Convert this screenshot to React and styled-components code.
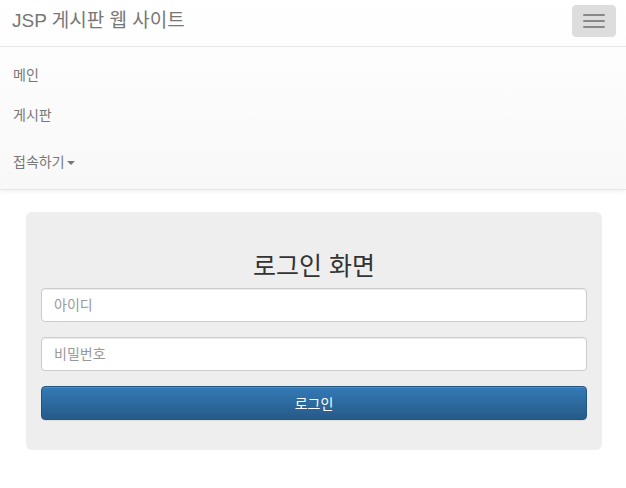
import { createGlobalStyle } from 'styled-components';
import styled from 'styled-components';

const GlobalStyle = createGlobalStyle`
  html, body {
    margin: 0;
    padding: 0;
    background: #fff;
  }
  body {
    font-family: "Liberation Sans", Arial, "Noto Sans CJK KR", sans-serif;
    font-size: 14px;
    line-height: 1.42857143;
    color: #333;
  }
  * {
    box-sizing: border-box;
  }
`;

const Navbar = styled.nav`
  background-image: linear-gradient(to bottom, #fff 0, #f8f8f8 100%);
  border-bottom: 1px solid #e7e7e7;
  box-shadow: inset 0 1px 0 rgba(255, 255, 255, 0.15), 0 1px 5px rgba(0, 0, 0, 0.075);
  margin-bottom: 22px;
`;

const NavHeader = styled.div`
  display: flex;
  align-items: center;
  justify-content: space-between;
  height: 46px;
  padding: 0 10px 0 12px;
`;

const Brand = styled.a`
  font-size: 19px;
  line-height: 20px;
  color: #777;
  text-decoration: none;
  margin-top: -4px;
`;

const Toggle = styled.button`
  display: flex;
  flex-direction: column;
  align-items: center;
  justify-content: center;
  gap: 4px;
  width: 44px;
  height: 32px;
  margin-top: -4px;
  padding: 0;
  background: #ddd;
  border: 1px solid #ddd;
  border-radius: 4px;
  cursor: pointer;
`;

const Bar = styled.span`
  display: block;
  width: 22px;
  height: 2px;
  border-radius: 1px;
  background: #888;
`;

const Collapse = styled.div`
  border-top: 1px solid #e7e7e7;
  box-shadow: inset 0 1px 0 rgba(255, 255, 255, 0.1);
  padding: 0.5px 0;
`;

const NavList = styled.ul`
  list-style: none;
  margin: 7px 0;
  padding: 0;
`;

const NavLink = styled.a`
  display: flex;
  align-items: center;
  height: 40px;
  padding: 0 13px;
  color: #777;
  font-size: 14px;
  text-decoration: none;
`;

const Caret = styled.span`
  display: inline-block;
  width: 0;
  height: 0;
  margin-left: 2px;
  margin-top: 2px;
  border-top: 4px solid #777;
  border-left: 4px solid transparent;
  border-right: 4px solid transparent;
`;

const Container = styled.div`
  padding: 0 24px 0 26px;
`;

const Jumbotron = styled.div`
  background: #eee;
  border-radius: 6px;
  padding: 30px 15px 30px;
`;

const Heading = styled.h3`
  margin: 11px 0 9px;
  font-size: 25px;
  font-weight: 400;
  line-height: 26px;
  text-align: center;
  color: #333;
`;

const FormGroup = styled.div`
  margin-bottom: 15px;
`;

const Input = styled.input`
  display: block;
  width: 100%;
  height: 34px;
  padding: 6px 12px;
  font-family: inherit;
  font-size: 14px;
  color: #555;
  background: #fff;
  border: 1px solid #ccc;
  border-radius: 4px;
  box-shadow: inset 0 1px 1px rgba(0, 0, 0, 0.075);
  outline: none;

  &::placeholder {
    color: #999;
  }
`;

const PrimaryButton = styled.button`
  display: block;
  width: 100%;
  height: 34px;
  font-family: inherit;
  font-size: 14px;
  color: #fff;
  background-image: linear-gradient(to bottom, #337ab7 0, #265a88 100%);
  border: 1px solid #245580;
  border-radius: 4px;
  box-shadow: inset 0 1px 0 rgba(255, 255, 255, 0.15), 0 1px 1px rgba(0, 0, 0, 0.075);
  cursor: pointer;
`;

export default function App() {
  return (
    <>
      <GlobalStyle />
      <Navbar>
        <NavHeader>
          <Brand href="#">JSP 게시판 웹 사이트</Brand>
          <Toggle aria-label="menu">
            <Bar />
            <Bar />
            <Bar />
          </Toggle>
        </NavHeader>
        <Collapse>
          <NavList>
            <li><NavLink href="#">메인</NavLink></li>
            <li><NavLink href="#">게시판</NavLink></li>
          </NavList>
          <NavList>
            <li>
              <NavLink href="#">
                접속하기<Caret />
              </NavLink>
            </li>
          </NavList>
        </Collapse>
      </Navbar>
      <Container>
        <Jumbotron>
          <form onSubmit={(e) => e.preventDefault()}>
            <Heading>로그인 화면</Heading>
            <FormGroup>
              <Input type="text" placeholder="아이디" />
            </FormGroup>
            <FormGroup>
              <Input type="password" placeholder="비밀번호" />
            </FormGroup>
            <PrimaryButton type="submit">로그인</PrimaryButton>
          </form>
        </Jumbotron>
      </Container>
    </>
  );
}
